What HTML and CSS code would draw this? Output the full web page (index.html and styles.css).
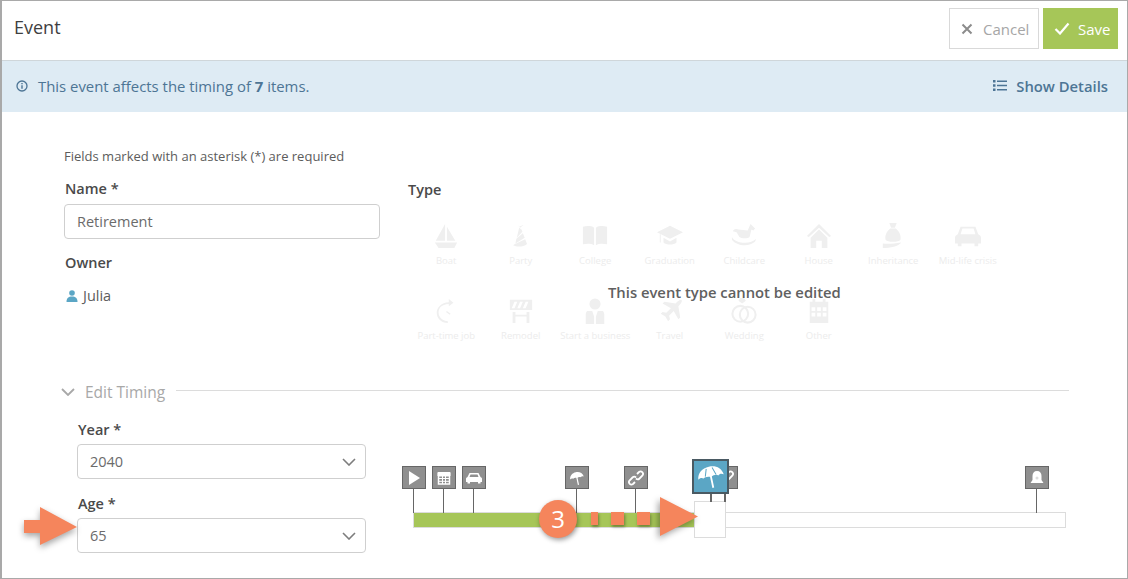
FILE: index.html
```html
<!DOCTYPE html>
<html lang="en">
<head>
<meta charset="utf-8">
<title>Event</title>
<link rel="stylesheet" href="styles.css">
</head>
<body>
<main class="frame">
  <header class="topbar">
    <h1 class="title">Event</h1>
    <div class="actions">
      <button class="btn btn-cancel"><svg class="btn-icon" viewBox="0 0 12 12"><path d="M1.5 1.5l9 9M10.500 1.500l-9 9" fill="none" stroke="#8c8c8c" stroke-width="2"/></svg>Cancel</button>
      <button class="btn btn-save"><svg class="btn-icon save-icon" viewBox="0 0 16 13"><path d="M1.500 7l4.500 4.500L14.500 1.500" fill="none" stroke="#fff" stroke-width="2.200"/></svg>Save</button>
    </div>
  </header>

  <section class="banner">
    <div class="banner-msg">
      <svg class="info-icon" viewBox="0 0 12 12"><circle cx="6" cy="6" r="5" fill="none" stroke="#4d7595" stroke-width="1.300"/><path d="M6 5.200v3.600M6 3v1.300" stroke="#4d7595" stroke-width="1.400"/></svg>
      <p>This event affects the timing of <b>7</b> items.</p>
    </div>
    <a class="details"><svg class="list-icon" viewBox="0 0 14 11"><path d="M0 0h2.500v2.500H0zM0 4.250h2.500v2.500H0zM0 8.500h2.500V11H0zM4 .4h10v1.700H4zM4 4.650h10v1.700H4zM4 8.900h10v1.700H4z" fill="#4d7595"/></svg>Show Details</a>
  </section>

  <section class="form">
    <p class="required">Fields marked with an asterisk (*) are required</p>
    <div class="upper">
      <div class="col-main">
        <label class="label">Name *</label>
        <div class="field">Retirement</div>
        <div class="label owner-label">Owner</div>
        <div class="owner"><svg class="user-icon" viewBox="0 0 12 12"><circle cx="6" cy="3" r="2.800" fill="#5ba6c5"/><path d="M.5 12c0-4 2-5.500 5.500-5.500s5.500 1.500 5.500 5.500z" fill="#5ba6c5"/></svg>Julia</div>
      </div>
      <div class="col-type">
        <div class="label">Type</div>
        <div class="types">
          <div class="type"><svg viewBox="0 0 28 28"><path d="M13 1v18H3zM15 4l9 15h-9zM2 21h24l-3 6H6z"/></svg><span>Boat</span></div>
          <div class="type"><svg viewBox="0 0 28 28"><path d="M12 5l2.500 2 1 2.500-6 6.500zM16 11l2 5-10 6 1-5zM18.500 17.500l2 5c-4 3.500-11 3.500-15 1.500l1.500-1zM9 0l3 4 5-2-4 3z"/></svg><span>Party</span></div>
          <div class="type"><svg viewBox="0 0 28 28"><path d="M1 4c4-1 9-1 12 1v19c-3-2-8-2-12-1zM15 5c3-2 8-2 12-1v19c-4-1-9-1-12 1z"/></svg><span>College</span></div>
          <div class="type"><svg viewBox="0 0 28 28"><path d="M14 3l14 7-14 7L0 10zM7 16l7 4 7-4v5c-3 3-11 3-14 0zM3 12h1v9H3z"/></svg><span>Graduation</span></div>
          <div class="type"><svg viewBox="0 0 28 28"><path d="M21 1l5 5-2 2-2-1-2 8c-1 2-9 2-11 0L6 10 2 9c1-3 4-3 6-2l10 1zM1 15c3 7 20 9 26 2l-1 3c-6 6-20 5-25-2z"/></svg><span>Childcare</span></div>
          <div class="type"><svg viewBox="0 0 28 28"><path d="M14 1l13 13-2 1L14 5 3 15l-2-1zM14 7l9 9v11h-6v-8h-6v8H5V16z"/></svg><span>House</span></div>
          <div class="type"><svg viewBox="0 0 28 28"><path d="M10 0h8l-2 5h-4zM11 6h6c4 3 6 8 5 12-2 3-14 3-16 0-1-4 1-9 5-12zM3 22c6 1 12 0 20-1-3 4-12 6-20 6z"/></svg><span>Inheritance</span></div>
          <div class="type"><svg viewBox="0 0 28 28"><path d="M6 4h16l3 8c2 1 3 2 3 4v6h-3v3h-4v-3H7v3H3v-3H0v-6c0-2 1-3 3-4zM8 6l-2 6h16l-2-6z" fill-rule="evenodd"/></svg><span>Mid-life crisis</span></div>
          <div class="type"><svg viewBox="0 0 28 28"><path d="M17 1l5 4-5 4V6.500C9 7 6 11 6 16s5 9 10 9v2C9 27 4 22 4 16S9 5 17 4.500zM15 14l4 3-1 1-4-3z"/></svg><span>Part-time job</span></div>
          <div class="type"><svg viewBox="0 0 28 28"><path d="M2 2h24v11H2zM7 4l-3 7h3l3-7zM13 4l-3 7h3l3-7zM19 4l-3 7h3l3-7zM5 15h3v3h12v-3h3v12h-3v-7H8v7H5z" fill-rule="evenodd"/></svg><span>Remodel</span></div>
          <div class="type"><svg viewBox="0 0 28 28"><circle cx="14" cy="6.500" r="6"/><path d="M6 14h5l2 6v8H4V18c0-2 1-4 2-4zM17 14h5c1 0 2 2 2 4v10h-9v-8z"/></svg><span>Start a business</span></div>
          <div class="type"><svg viewBox="0 0 28 28"><path d="M26 2c2 1 0 4-3 7l2 12-2 2-5-9-5 5 1 4-2 2-3-5-5-3 2-2 4 1 5-5-9-5 2-2 12 2c2-2 4-4 6-4z"/></svg><span>Travel</span></div>
          <div class="type"><svg viewBox="0 0 28 28"><path d="M10 0h4l2 3-4 3-4-3z"/><circle cx="10" cy="17" r="8.500" fill="none"/><circle cx="18" cy="18" r="8.500" fill="none"/></svg><span>Wedding</span></div>
          <div class="type"><svg viewBox="0 0 28 28"><path d="M4 4h3V1h3v3h8V1h3v3h3v23H4zM6 10v4h4v-4zM12 10v4h4v-4zM18 10v4h4v-4zM6 16v4h4v-4zM12 16v4h4v-4zM18 16v4h4v-4z" fill-rule="evenodd"/></svg><span>Other</span></div>
        </div>
        <p class="locked">This event type cannot be edited</p>
      </div>
    </div>

    <div class="timing-head">
      <svg class="chev" viewBox="0 0 14 8"><path d="M1 1l6 6 6-6" fill="none" stroke="#a8a8a8" stroke-width="1.800"/></svg>
      <span class="timing-title">Edit Timing</span>
      <span class="timing-rule"></span>
    </div>

    <div class="timing">
      <div class="selects">
        <label class="label">Year *</label>
        <div class="select">2040<svg viewBox="0 0 14 8"><path d="M1 1l6 6 6-6" fill="none" stroke="#7d7d7d" stroke-width="1.600"/></svg></div>
        <label class="label age-label">Age *</label>
        <div class="select">65<svg viewBox="0 0 14 8"><path d="M1 1l6 6 6-6" fill="none" stroke="#7d7d7d" stroke-width="1.600"/></svg></div>
      </div>
      <div class="track-area">
        <div class="track"><div class="track-fill"></div></div>

        <div class="pin pin-a"><svg viewBox="0 0 16 16"><path d="M3 1l11 7-11 7z" fill="#fff"/></svg></div>
        <div class="pin pin-b"><svg viewBox="0 0 16 16"><path d="M2.500 3h11v11h-11z" fill="none" stroke="#fff" stroke-width="1.500"/><path d="M2 2.500h12V6H2zM6.500 3v11M9.500 3v11M2 8.500h12M2 11.300h12" fill="#fff" stroke="#fff"/></svg></div>
        <div class="pin pin-c"><svg viewBox="0 0 16 16"><path d="M3.500 3h9l2 4c1 .5 1.500 1 1.500 2v3h-1.500v1.500h-2.500V12H4v1.500H1.500V12H0V9c0-1 .5-1.500 1.500-2zM4.500 4.500L3.500 7h9l-1-2.500z" fill="#fff" fill-rule="evenodd"/></svg></div>
        <div class="pin pin-d"><svg viewBox="0 0 16 16"><g transform="rotate(-12 8 8)"><path d="M1 8C1.500 4 4.500 2 8 2s6.500 2 7 6c-1-.8-2.300-.8-3.200 0-.8-.8-2.300-.8-3.800 0-1.500-.8-3-.8-3.800 0C3.300 7.200 2 7.200 1 8z" fill="#fff"/><path d="M8 7v8" stroke="#fff" stroke-width="1.200"/></g></svg></div>
        <div class="pin pin-e"><svg viewBox="0 0 16 16"><path d="M9 4l2-2a2.500 2.500 0 0 1 3.500 3.500l-3 3a2.500 2.500 0 0 1-3.500 0M7 12l-2 2a2.500 2.500 0 0 1-3.500-3.500l3-3a2.500 2.500 0 0 1 3.500 0" fill="none" stroke="#fff" stroke-width="1.800"/></svg></div>
        <div class="pin pin-f"><svg viewBox="0 0 16 16"><path d="M9 4l2-2a2.500 2.500 0 0 1 3.500 3.500l-3 3a2.500 2.500 0 0 1-3.500 0M7 12l-2 2a2.500 2.500 0 0 1-3.500-3.500l3-3a2.500 2.500 0 0 1 3.500 0" fill="none" stroke="#fff" stroke-width="1.800"/></svg></div>
        <div class="pin pin-g"><svg viewBox="0 0 16 16"><path d="M8 1c3 0 4.500 2 4.500 5v4l2 3H1.500l2-3V6c0-3 1.500-5 4.500-5z" fill="#fff"/><circle cx="8" cy="8" r="1.500" fill="#ddd"/></svg></div>

        <div class="handle"></div>
        <div class="pin-stem stem-left"></div>
        <div class="pin-stem stem-right"></div>
        <div class="pin-selected"><svg viewBox="0 0 28 28"><g transform="rotate(-12 14 14)"><path d="M1 14C2 7 7 3.500 14 3.500S26 7 27 14c-2-1.500-4-1.500-5.500 0-1.500-1.500-4.500-1.500-7.500 0-3-1.500-6-1.500-7.500 0C5 12.500 3 12.500 1 14z" fill="#fff"/><path d="M8.500 12.500L11 5M19.500 12.500L17 5" stroke="#5ba6c5" stroke-width="1"/><path d="M14 12v13" stroke="#fff" stroke-width="1.800"/></g></svg></div>

        <div class="dash dash-1"></div>
        <div class="dash dash-2"></div>
        <div class="dash dash-3"></div>
        <div class="badge">3</div>
        <svg class="arrow-tip" viewBox="0 0 52 52"><path d="M4 4l38 19.500L4 43z" fill="#f5855c"/></svg>
      </div>
      <svg class="arrow-left" viewBox="0 0 70 52"><path d="M4 17h16V4l37 20-37 18V30H4z" fill="#f5855c"/></svg>
    </div>
  </section>
</main>
</body>
</html>
```
FILE: styles.css
```css
* { box-sizing: border-box; }
html, body { margin: 0; padding: 0; background: #fff; }
body { font-family: "Open Sans", "Liberation Sans", sans-serif; color: #4a4a4a; }
p, h1 { margin: 0; }

.frame {
  width: 1128px;
  height: 579px;
  border: 1px solid #a9a9a9;
  border-width: 1px 1px 1px 2px;
  overflow: hidden;
  background: #fff;
}

.topbar {
  height: 60px;
  display: flex;
  align-items: flex-start;
  justify-content: space-between;
  padding: 7px 9px 0 12px;
  border-bottom: 1px solid #cfd6da;
}
.title { font-size: 18px; font-weight: 400; line-height: 24px; margin-top: 7px; color: #3f3f3f; }
.actions { display: flex; gap: 4px; }
.btn {
  height: 41px;
  display: flex;
  align-items: center;
  font: 400 15px "Open Sans", sans-serif;
  border: 0;
  padding: 0;
}
.btn-cancel { width: 90px; padding-left: 11px; background: #fff; border: 1px solid #d9d9d9; color: #a6a6a6; }
.btn-save { width: 75px; padding-left: 11px; background: #a6c658; color: #fff; }
.btn-icon { width: 12px; height: 12px; margin-right: 10px; }
.save-icon { width: 16px; height: 13px; margin-right: 8px; }

.banner {
  height: 51px;
  display: flex;
  align-items: center;
  justify-content: space-between;
  padding: 0 19px 2px 14px;
  background: #deebf4;
  color: #4d7595;
  font-size: 14.900px;
}
.banner-msg { display: flex; align-items: center; }
.banner-msg b { font-weight: 700; }
.info-icon { width: 12px; height: 12px; margin-right: 10px; }
.details { display: flex; align-items: center; font-weight: 600; font-size: 14.800px; }
.list-icon { width: 14px; height: 11px; margin-right: 9px; }

.form { position: relative; padding: 36px 58px 0 62px; }
.required { font-size: 13px; line-height: 16px; color: #5c5c5c; }
.label { display: block; font-size: 14.500px; font-weight: 600; line-height: 20px; color: #4a4a4a; padding-left: 1px; }

.upper { display: flex; gap: 28px; margin-top: 15px; height: 210px; }
.col-main { width: 316px; flex: none; }
.field {
  height: 35px;
  margin-top: 5px;
  padding: 0 12px;
  line-height: 33px;
  font-size: 14.500px;
  color: #6b6b6b;
  border: 1px solid #cfcfcf;
  border-radius: 4px;
}
.owner-label { margin-top: 14px; }
.owner { display: flex; align-items: center; margin-top: 13px; font-size: 14.500px; line-height: 20px; color: #5c5c5c; }
.user-icon { width: 12px; height: 12px; margin-right: 5px; margin-left: 2px; }

.col-type { position: relative; flex: 1; margin-top: 1px; }
.col-type > .label { padding-left: 0; }
.types {
  display: grid;
  grid-template-columns: repeat(8, 74.500px);
  grid-auto-rows: 74.500px;
  margin: 8px 0 0 1px;
}
.type { display: flex; flex-direction: column; align-items: center; }
.type svg { width: 26px; height: 26px; fill: #efefef; stroke: #efefef; stroke-width: 0; margin-top: 15px; }
.type svg circle[fill="none"] { stroke-width: 2.200; }
.type span { font-size: 9.500px; line-height: 13px; margin-top: 5px; color: #ececec; white-space: nowrap; }
.locked {
  position: absolute;
  left: 200px;
  top: 102px;
  font-size: 14.800px;
  font-weight: 600;
  line-height: 20px;
  color: #606060;
  white-space: nowrap;
}

.timing-head { display: flex; align-items: center; height: 20px; margin-left: -3px; margin-top: -7px; }
.chev { width: 14px; height: 8px; margin-right: 10px; }
.timing-title { font-size: 15.500px; color: #a8a8a8; line-height: 20px; }
.timing-rule { flex: 1; height: 1px; background: #dcdcdc; margin: 0 0 3px 11px; }

.timing { display: flex; margin: 18px 0 0 13px; }
.selects { width: 289px; flex: none; }
.select {
  height: 35px;
  margin-top: 4px;
  padding: 0 12px;
  font-size: 14.500px;
  color: #6b6b6b;
  border: 1px solid #cfcfcf;
  border-radius: 4px;
  display: flex;
  justify-content: space-between;
  align-items: center;
}
.select svg { width: 14px; height: 8px; margin-right: -3px; }
.age-label { margin-top: 15px; }

.track-area { position: relative; flex: none; width: 720px; height: 110px; margin: 19px 0 0 47px; }
.track { position: absolute; left: 0; top: 73px; width: 653px; height: 16px; border: 1px solid #dcdcdc; background: #fff; }
.track-fill { width: 282px; height: 14px; background: #a6c658; }

.pin {
  position: absolute;
  top: 27px;
  width: 24px;
  height: 23px;
  background: #8f8f8f;
  border: 1px solid #666;
  display: flex;
  align-items: center;
  justify-content: center;
}
.pin svg { width: 16px; height: 16px; }
.pin::after {
  content: "";
  position: absolute;
  left: 10px;
  top: 22px;
  width: 1px;
  height: 24px;
  background: #666;
}
.pin-a { left: -11px; }
.pin-b { left: 19px; }
.pin-c { left: 49px; }
.pin-d { left: 152px; }
.pin-e { left: 211px; }
.pin-f { left: 301px; }
.pin-g { left: 612px; }

.handle { position: absolute; left: 281px; top: 62px; width: 32px; height: 37px; background: #fff; border: 1px solid #dcdcdc; }
.pin-stem { position: absolute; top: 54px; width: 2px; height: 9px; background: #666; }
.stem-left { left: 297px; }
.stem-right { left: 311px; }
.pin-selected {
  position: absolute;
  left: 279px;
  top: 20px;
  width: 37px;
  height: 35px;
  background: #5ba6c5;
  border: 2px solid #4a5a63;
  display: flex;
  align-items: center;
  justify-content: center;
}
.pin-selected svg { width: 28px; height: 28px; }

.dash { position: absolute; top: 73px; height: 13px; background: #f5855c; box-shadow: 1px 2px 3px rgba(0,0,0,.35); }
.dash-1 { left: 178px; width: 7px; }
.dash-2 { left: 198px; width: 13px; }
.dash-3 { left: 224px; width: 13px; }

.badge {
  position: absolute;
  left: 126px;
  top: 61px;
  width: 38px;
  height: 38px;
  border-radius: 50%;
  background: #f5855c;
  color: #fff;
  font-size: 24px;
  line-height: 38px;
  text-align: center;
  box-shadow: 1px 2px 5px rgba(0,0,0,.4);
}
.arrow-tip {
  position: absolute;
  left: 243px;
  top: 54px;
  width: 52px;
  height: 52px;
  filter: drop-shadow(-2px 3px 3px rgba(0,0,0,.35));
}
.arrow-left {
  position: absolute;
  left: 18px;
  top: 391px;
  width: 70px;
  height: 52px;
  filter: drop-shadow(0 3px 3px rgba(0,0,0,.35));
}
```
